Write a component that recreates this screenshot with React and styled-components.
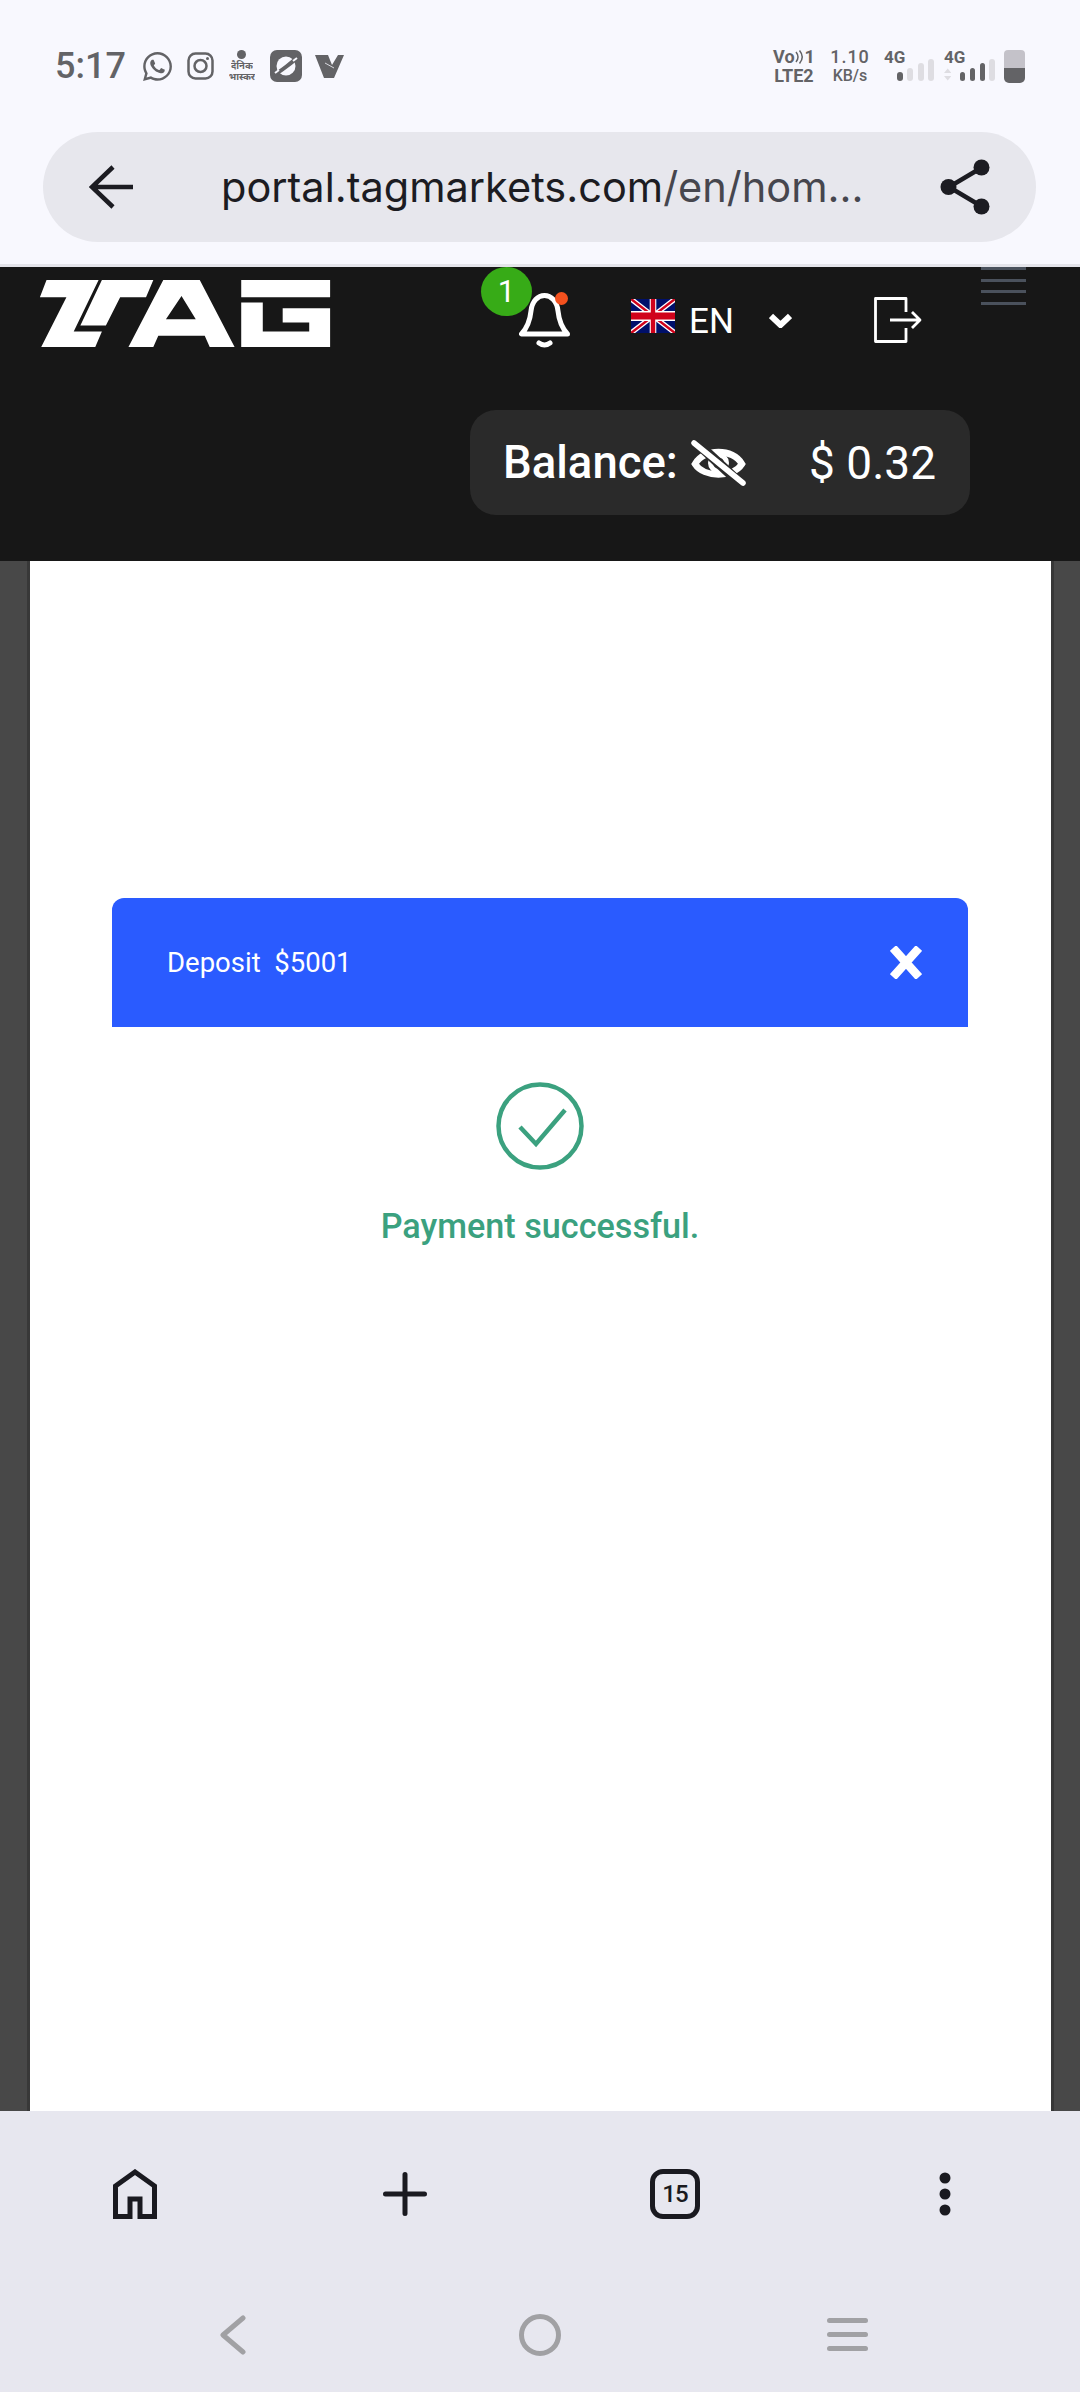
import React from "react";
import styled, { createGlobalStyle } from "styled-components";
import { FaWhatsapp } from "react-icons/fa";

const Global = createGlobalStyle`
  html, body { margin: 0; padding: 0; background: #fff; }
  * { box-sizing: border-box; }
  body { font-family: Roboto, "Liberation Sans", sans-serif; }
`;

const Page = styled.div`
  width: 1080px;
  height: 2392px;
  overflow: hidden;
  display: flex;
  flex-direction: column;
`;

const TopChrome = styled.div`
  height: 267px;
  flex: none;
  background: #f8f8fe;
  border-bottom: 3px solid #e4e4ea;
`;

const StatusBar = styled.div`
  height: 132px;
  padding: 0 55px 0 55px;
  display: flex;
  align-items: center;
  color: #636366;
`;

const Clock = styled.span`
  font-size: 36px;
  font-weight: 500;
  line-height: 1;
  margin-right: 15px;
`;

const NotifIcons = styled.div`
  display: flex;
  align-items: center;
  gap: 13px;
`;

const PaperLogo = styled.div`
  width: 30px;
  height: 32px;
  display: flex;
  flex-direction: column;
  align-items: center;
  font-family: "Noto Sans", "DejaVu Sans", sans-serif;
  font-size: 9.5px;
  font-weight: 700;
  white-space: nowrap;
  color: #636366;
`;

const PaperDot = styled.i`
  width: 9px;
  height: 9px;
  flex: none;
  border-radius: 50%;
  background: #636366;
  margin-bottom: 1px;
`;

const PaperLine = styled.div`
  height: 11px;
  line-height: 11px;
  overflow: hidden;
`;

const StatusRight = styled.div`
  margin-left: auto;
  display: flex;
  align-items: flex-end;
  height: 33px;
`;

const StatusColumn = styled.div`
  display: flex;
  flex-direction: column;
  align-items: center;
  justify-content: space-between;
  height: 33px;
  width: ${(p) => p.$w}px;
  margin-right: ${(p) => p.$mr || 0}px;
  font-size: 18px;
  font-weight: 700;
  line-height: 14px;
  color: #636366;
  white-space: nowrap;
`;

const SpeedValue = styled.span`
  font-size: 18px;
  font-weight: 500;
  letter-spacing: 1px;
`;

const SpeedUnit = styled.span`
  font-size: 16px;
  font-weight: 500;
`;

const VoLine = styled.span`
  display: inline-flex;
  align-items: center;
  font-size: 18px;
`;

const SignalGroup = styled.div`
  position: relative;
  display: flex;
  align-items: flex-end;
  gap: ${(p) => p.$gap}px;
  height: 33px;
  width: ${(p) => p.$w}px;
  margin-right: ${(p) => p.$mr || 0}px;
  justify-content: flex-end;
  padding-bottom: 1.5px;
`;

const SignalLabel = styled.span`
  position: absolute;
  left: 0;
  top: -1px;
  font-size: 17px;
  font-weight: 700;
  line-height: 16px;
  color: #636366;
`;

const Bar = styled.i`
  width: 6px;
  border-radius: 3px;
  height: ${(p) => p.$h}px;
  background: ${(p) => (p.$on ? "#636366" : "#dedde2")};
`;

const ArrowPair = styled.svg`
  margin-right: 4px;
`;

const Battery = styled.div`
  width: 21px;
  height: 33px;
  border-radius: 4px 4px 5px 5px;
  background: linear-gradient(#c4c2c9 0 18px, #636366 18px);
`;

const UrlWrap = styled.div`
  padding: 0 44px 0 43px;
`;

const UrlPill = styled.div`
  height: 110px;
  border-radius: 55px;
  background: #e7e7ed;
  display: flex;
  align-items: center;
  padding: 0 46px;
`;

const UrlBack = styled.svg`
  flex: none;
`;

const UrlText = styled.div`
  margin-left: 88px;
  font-family: Inter, Roboto, sans-serif;
  font-size: 41.5px;
  font-weight: 400;
  color: #1c1c22;
  white-space: nowrap;
`;

const UrlPath = styled.span`
  color: #46464e;
`;

const UrlShare = styled.svg`
  margin-left: auto;
  flex: none;
`;

const Header = styled.header`
  height: 294px;
  flex: none;
  background: #171717;
  overflow: hidden;
`;

const HeaderRow = styled.div`
  height: 143px;
  padding-left: 39px;
  display: flex;
  align-items: flex-start;
  color: #fff;
`;

const Logo = styled.svg`
  margin-top: 13px;
  flex: none;
`;

const BellWrap = styled.div`
  position: relative;
  margin: 26px 0 0 188px;
  width: 51px;
  height: 56px;
`;

const Badge = styled.span`
  position: absolute;
  left: -38px;
  top: -26px;
  width: 51px;
  height: 49px;
  border-radius: 50%;
  background: #37ab17;
  color: #fff;
  font-size: 31px;
  line-height: 49px;
  text-align: center;
`;

const RedDot = styled.span`
  position: absolute;
  left: 36px;
  top: -1px;
  width: 13px;
  height: 13px;
  border-radius: 50%;
  background: #f4511e;
`;

const Flag = styled.svg`
  margin: 32px 0 0 61px;
  flex: none;
`;

const Lang = styled.span`
  margin: 33px 0 0 14px;
  font-size: 35px;
  line-height: 44px;
`;

const Chevron = styled.svg`
  margin: 46px 0 0 35px;
  flex: none;
`;

const LogoutIcon = styled.svg`
  margin: 30px 0 0 82px;
  flex: none;
`;

const Burger = styled.div`
  margin-left: 59px;
  width: 45px;
  display: flex;
  flex-direction: column;
  gap: 8.5px;
`;

const BurgerLine = styled.i`
  display: block;
  height: 3px;
  background: #4a515c;
`;

const BalanceRow = styled.div`
  padding-left: 470px;
`;

const BalancePill = styled.div`
  width: 500px;
  height: 105px;
  border-radius: 26px;
  background: #2a2a2a;
  color: #fff;
  display: flex;
  align-items: center;
  padding: 0 34px 0 33px;
`;

const BalanceLabel = styled.span`
  font-size: 45.5px;
  font-weight: 500;
`;

const BalanceIcon = styled.svg`
  margin-left: 13px;
  flex: none;
`;

const BalanceValue = styled.span`
  margin-left: auto;
  font-size: 46px;
`;

const Main = styled.main`
  flex: 1;
  min-height: 0;
  display: flex;
  background: linear-gradient(90deg, #484848 27px, #383838 27px, #383838 1054px, #484848 1054px);
  padding: 0 29px 0 30px;
`;

const Content = styled.div`
  flex: 1;
  background: #fff;
  padding: 337px 83px 0 82px;
`;

const ModalHead = styled.div`
  height: 129px;
  background: #2a5bff;
  border-radius: 12px 12px 0 0;
  color: #fff;
  display: flex;
  align-items: center;
  justify-content: space-between;
  padding: 0 46px 0 55px;
`;

const ModalTitle = styled.span`
  font-size: 27.5px;
  white-space: pre;
`;

const Success = styled.div`
  padding-top: 55px;
  display: flex;
  flex-direction: column;
  align-items: center;
`;

const SuccessText = styled.div`
  margin-top: 36px;
  font-size: 34.2px;
  font-weight: 500;
  color: #3ba17f;
`;

const BottomChrome = styled.div`
  height: 281px;
  flex: none;
  background: #e7e7ef;
`;

const BrowserNav = styled.nav`
  height: 166px;
  display: grid;
  grid-template-columns: repeat(4, 270px);
  align-items: center;
  justify-items: center;
`;

const TabCount = styled.div`
  width: 50px;
  height: 50px;
  border: 5px solid #1a1a20;
  border-radius: 13px;
  display: flex;
  align-items: center;
  justify-content: center;
  color: #1a1a20;
  font-size: 24px;
  font-weight: 500;
  letter-spacing: -1px;
`;

const SystemNav = styled.nav`
  height: 115px;
  padding: 0 79px;
  display: grid;
  grid-template-columns: repeat(3, 1fr);
  align-items: center;
  justify-items: center;
`;

const UkFlag = () => (
  <Flag width="44" height="34" viewBox="0 0 60 30" preserveAspectRatio="none">
    <rect width="60" height="30" fill="#00106b" />
    <path d="M0 0 60 30M60 0 0 30" stroke="#fff" strokeWidth="5" />
    <path d="M0 0 60 30M60 0 0 30" stroke="#d0021b" strokeWidth="2.5" />
    <path d="M30 0V30M0 15H60" stroke="#fff" strokeWidth="9" />
    <path d="M30 0V30M0 15H60" stroke="#d0021b" strokeWidth="6" />
  </Flag>
);

export default function App() {
  return (
    <Page>
      <Global />
      <TopChrome>
        <StatusBar>
          <Clock>5:17</Clock>
          <NotifIcons>
            <FaWhatsapp size={33} color="#636366" />
            <svg width="27" height="28" viewBox="0 0 27 28" fill="none" stroke="#636366">
              <rect x="1.5" y="1.5" width="24" height="25" rx="7" strokeWidth="2.5" />
              <circle cx="13.5" cy="14" r="6" strokeWidth="2.5" />
              <circle cx="20.5" cy="6.5" r="1.5" fill="#636366" stroke="none" />
            </svg>
            <PaperLogo>
              <PaperDot />
              <PaperLine>दैनिक</PaperLine>
              <PaperLine>भास्कर</PaperLine>
            </PaperLogo>
            <svg width="32" height="32" viewBox="0 0 32 32">
              <rect width="32" height="32" rx="7" fill="#636366" />
              <ellipse cx="16" cy="16" rx="9.5" ry="9.5" fill="#f8f8fe" />
              <path d="M3 25 C8 24 26 9 29 6" stroke="#636366" strokeWidth="4" fill="none" />
              <path d="M5 23 L9 20 M23 11 L27 8" stroke="#f8f8fe" strokeWidth="2" fill="none" />
            </svg>
            <svg width="29" height="24" viewBox="0 0 29 24">
              <path d="M0 1H13L17 11L23 1H29L19 24H9Z" fill="#636366" />
              <path d="M10 9L19 14" stroke="#f8f8fe" strokeWidth="0.8" />
            </svg>
          </NotifIcons>
          <StatusRight>
            <StatusColumn $w={43} $mr={15.5}>
              <VoLine>
                Vo
                <svg width="10" height="14" viewBox="0 0 10 14" fill="none" stroke="#636366" strokeWidth="1.5">
                  <path d="M1 2Q5 7 1 12M4.5 0.5Q10 7 4.5 13.5" />
                </svg>
                1
              </VoLine>
              <span>LTE2</span>
            </StatusColumn>
            <StatusColumn $w={38} $mr={15}>
              <SpeedValue>1.10</SpeedValue>
              <SpeedUnit>KB/s</SpeedUnit>
            </StatusColumn>
            <SignalGroup $gap={4.3} $w={50} $mr={10}>
              <SignalLabel>4G</SignalLabel>
              <Bar $on $h={9} />
              <Bar $h={13} />
              <Bar $h={18} />
              <Bar $h={22} />
            </SignalGroup>
            <SignalGroup $gap={4.3} $w={51} $mr={9}>
              <SignalLabel>4G</SignalLabel>
              <ArrowPair width="8" height="13" viewBox="0 0 8 13" fill="#dedde2">
                <path d="M4 0 8 5H0ZM4 13 0 8H8Z" />
              </ArrowPair>
              <Bar $on $h={9} />
              <Bar $on $h={13} />
              <Bar $on $h={18} />
              <Bar $h={22} />
            </SignalGroup>
            <Battery />
          </StatusRight>
        </StatusBar>
        <UrlWrap>
          <UrlPill>
            <UrlBack width="44" height="44" viewBox="0 0 44 44" fill="none" stroke="#1c1c22" strokeWidth="4.5">
              <path d="M44 22H3M24 2 3 22 24 42" />
            </UrlBack>
            <UrlText>
              portal.tagmarkets.com<UrlPath>/en/hom...</UrlPath>
            </UrlText>
            <UrlShare width="50" height="56" viewBox="0 0 50 56" fill="#1c1c22" stroke="#1c1c22">
              <circle cx="8.5" cy="28" r="8" stroke="none" />
              <circle cx="41.5" cy="8.5" r="8" stroke="none" />
              <circle cx="41.5" cy="47.5" r="8" stroke="none" />
              <path d="M41 9 9 28 41 47" fill="none" strokeWidth="4.5" />
            </UrlShare>
          </UrlPill>
        </UrlWrap>
      </TopChrome>

      <Header>
        <HeaderRow>
          <Logo width="292" height="67" viewBox="58 60 875 202" fill="#fff">
            <path d="M78 60H235L160 215H245L225 262H62L138 112H58Z" />
            <path d="M245 60H400L378 112H300L257 197H180Z" />
            <path
              fillRule="evenodd"
              d="M325 262 430 60H540L645 262H570L555 228H415L400 262ZM485 108 438 178H528Z"
            />
            <path d="M665 60H933V112H665Z" />
            <path d="M665 128H730V215H870V188H790V145H933V262H665Z" />
          </Logo>
          <BellWrap>
            <svg width="51" height="56" viewBox="0 0 51 56" fill="none" stroke="#fff" strokeLinecap="round" strokeLinejoin="round">
              <path strokeWidth="5" d="M2.5 41H48.5C43 35 40 28 39 18C38 8 32 2.5 25.5 2.5C19 2.5 13 8 12 18C11 28 8 35 2.5 41Z" />
              <path strokeWidth="5" d="M20 50Q25.5 54 31 50" />
            </svg>
            <RedDot />
            <Badge>1</Badge>
          </BellWrap>
          <UkFlag />
          <Lang>EN</Lang>
          <Chevron width="23" height="15" viewBox="0 0 23 15" fill="none" stroke="#fff" strokeWidth="6">
            <path d="M2 3 11.5 12 21 3" />
          </Chevron>
          <LogoutIcon width="48" height="46" viewBox="0 0 48 46" fill="none" stroke="#fff" strokeWidth="2.8" strokeLinejoin="round">
            <path d="M32 15V1.5H1.5V44.5H32V31" />
            <path d="M16 23H46M38 15 46 23 38 31" />
          </LogoutIcon>
          <Burger>
            <BurgerLine />
            <BurgerLine />
            <BurgerLine />
            <BurgerLine />
          </Burger>
        </HeaderRow>
        <BalanceRow>
          <BalancePill>
            <BalanceLabel>Balance:</BalanceLabel>
            <BalanceIcon width="55" height="46" viewBox="0 0 55 46" fill="none" stroke="#fff">
              <path strokeWidth="6.5" d="M4 24C13 8 42 8 51 24C42 38 13 38 4 24Z" />
              <circle cx="27.5" cy="23" r="8" strokeWidth="5" />
              <path stroke="#2a2a2a" strokeWidth="10" d="M6 3 50 44" />
              <path strokeWidth="5.5" strokeLinecap="round" d="M3 3 52 43" />
            </BalanceIcon>
            <BalanceValue>$ 0.32</BalanceValue>
          </BalancePill>
        </BalanceRow>
      </Header>

      <Main>
        <Content>
          <ModalHead>
            <ModalTitle>Deposit  $5001</ModalTitle>
            <svg width="32" height="33" viewBox="0 0 32 33" fill="none" stroke="#fff" strokeWidth="8.5">
              <path d="M3 2 29 31M29 2 3 31" />
            </svg>
          </ModalHead>
          <Success>
            <svg width="88" height="88" viewBox="0 0 88 88" fill="none" stroke="#3ba17f">
              <circle cx="44" cy="44" r="41.5" strokeWidth="4.5" />
              <path strokeWidth="4.5" d="M24 45 40 62 69 28" />
            </svg>
            <SuccessText>Payment successful.</SuccessText>
          </Success>
        </Content>
      </Main>

      <BottomChrome>
        <BrowserNav>
          <svg width="44" height="50" viewBox="0 0 44 50" fill="none" stroke="#1a1a20" strokeWidth="5">
            <path d="M2.5 47.5V17L22 3 41.5 17V47.5H27V30H17V47.5Z" />
          </svg>
          <svg width="44" height="44" viewBox="0 0 44 44" fill="none" stroke="#1a1a20" strokeWidth="5" strokeLinecap="round">
            <path d="M22 2.5V41.5M2.5 22H41.5" />
          </svg>
          <TabCount>15</TabCount>
          <svg width="12" height="44" viewBox="0 0 12 44" fill="#1a1a20">
            <circle cx="6" cy="6" r="5.5" />
            <circle cx="6" cy="22" r="5.5" />
            <circle cx="6" cy="38" r="5.5" />
          </svg>
        </BrowserNav>
        <SystemNav>
          <svg width="26" height="40" viewBox="0 0 26 40" fill="none" stroke="#a1a1a4" strokeWidth="5" strokeLinecap="round" strokeLinejoin="round">
            <path d="M23 3 3 20 23 37" />
          </svg>
          <svg width="42" height="42" viewBox="0 0 42 42" fill="none" stroke="#a1a1a4" strokeWidth="5">
            <circle cx="21" cy="21" r="18.5" />
          </svg>
          <svg width="41" height="33" viewBox="0 0 41 33" fill="#a1a1a4">
            <rect width="41" height="5" rx="2.5" />
            <rect y="14" width="41" height="5" rx="2.5" />
            <rect y="28" width="41" height="5" rx="2.5" />
          </svg>
        </SystemNav>
      </BottomChrome>
    </Page>
  );
}
